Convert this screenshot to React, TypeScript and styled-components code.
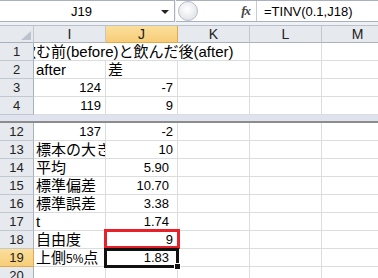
import React from "react";
import styled, { createGlobalStyle, css } from "styled-components";

const GlobalStyle = createGlobalStyle`
  html, body {
    margin: 0;
    padding: 0;
    background: #fff;
    overflow: hidden;
  }
  body {
    font-family: "Liberation Sans", "Noto Sans CJK JP", sans-serif;
  }
`;

const GRID = "#dadcdd";
const HEAD_BG = "#e6e9ee";
const HEAD_LINE = "#c2c8d0";

const Screen = styled.div`
  width: 378px;
  height: 278px;
  overflow: hidden;
  display: flex;
  flex-direction: column;
  background: #fff;
`;

const FormulaBar = styled.div`
  flex: none;
  height: 26px;
  box-sizing: border-box;
  display: flex;
  align-items: flex-start;
  gap: 1px;
  background: #eef1f5;
  border-bottom: 1px solid #b9c0c9;
`;

const NameBox = styled.div`
  width: 175px;
  height: 22px;
  box-sizing: border-box;
  display: flex;
  align-items: center;
  background: #fff;
  border-top: 1px solid #a9b1bc;
  border-bottom: 1px solid #a9b1bc;
  border-right: 1px solid #a9b1bc;
  font-size: 13px;
  color: #000;
`;

const NameText = styled.span`
  flex: 1;
  text-align: center;
  padding-left: 2px;
`;

const DropArrow = styled.span`
  width: 0;
  height: 0;
  margin: 2px 5px 0 0;
  border-left: 4px solid transparent;
  border-right: 4px solid transparent;
  border-top: 4px solid #222;
`;

const FormulaArea = styled.div`
  flex: 1;
  height: 22px;
  box-sizing: border-box;
  display: flex;
  align-items: center;
  background: #fff;
  border-top: 1px solid #a9b1bc;
  border-bottom: 1px solid #a9b1bc;
  overflow: hidden;
`;

const Grip = styled.span`
  flex: none;
  width: 20px;
  height: 20px;
  margin-left: 2px;
  box-sizing: border-box;
  border-radius: 50%;
  border: 1px solid #b8bec7;
  background: radial-gradient(circle at 45% 40%, #ffffff 0%, #eef0f3 45%, #d5d9df 100%);
`;

const FxLabel = styled.span`
  flex: none;
  width: 58px;
  text-align: right;
  padding-right: 6px;
  box-sizing: border-box;
  font-family: "Liberation Serif", serif;
  font-style: italic;
  font-weight: bold;
  font-size: 13px;
  color: #444;
  letter-spacing: -1px;
`;

const FormulaInput = styled.div`
  flex: 1;
  height: 100%;
  display: flex;
  align-items: center;
  padding-left: 7px;
  border-left: 1px solid #c6ccd4;
  font-size: 13px;
  white-space: nowrap;
`;

const Sheet = styled.div`
  display: grid;
  grid-template-columns: 34px repeat(5, 72px);
  width: 394px;
`;

const headActive = css`
  background: linear-gradient(#fbdf9c, #f6cd78);
  border-color: #e2a94c;
`;

const Corner = styled.div`
  position: relative;
  height: 17px;
  box-sizing: border-box;
  background: ${HEAD_BG};
  border-right: 1px solid ${HEAD_LINE};
  border-bottom: 1px solid #a9b1bc;

  &::after {
    content: "";
    position: absolute;
    right: 2px;
    bottom: 2px;
    width: 0;
    height: 0;
    border-left: 10px solid transparent;
    border-bottom: 9px solid #bcc3cc;
  }
`;

const ColHeader = styled.div<{ $active?: boolean }>`
  height: 17px;
  box-sizing: border-box;
  background: ${HEAD_BG};
  border-right: 1px solid ${HEAD_LINE};
  border-bottom: 1px solid #a9b1bc;
  font-size: 14px;
  line-height: 16px;
  text-align: center;
  color: #222;
  ${(p) => p.$active && headActive}
`;

const RowHeader = styled.div<{ $active?: boolean }>`
  height: 18px;
  box-sizing: border-box;
  background: ${HEAD_BG};
  border-right: 1px solid #a9b1bc;
  border-bottom: 1px solid ${HEAD_LINE};
  font-size: 13px;
  line-height: 18px;
  text-align: center;
  color: #222;
  ${(p) => p.$active && headActive}
`;

type Mark = "red" | "select";

const Cell = styled.div<{ $num?: boolean; $dec?: boolean; $span?: number; $mark?: Mark }>`
  height: 18px;
  box-sizing: border-box;
  grid-column: span ${(p) => p.$span ?? 1};
  border-right: 1px solid ${GRID};
  border-bottom: 1px solid ${GRID};
  font-size: ${(p) => (p.$num ? "13px" : "15px")};
  line-height: 18px;
  white-space: nowrap;
  overflow: hidden;
  color: #000;
  text-align: ${(p) => (p.$num ? "right" : "left")};
  padding: ${(p) => (p.$num ? (p.$dec ? "0 8px 0 0" : "0 4px 0 0") : "0 0 0 2px")};

  ${(p) =>
    p.$mark &&
    css`
      position: relative;
      overflow: visible;
      z-index: 2;
    `}

  ${(p) =>
    p.$mark === "red" &&
    css`
      &::after {
        content: "";
        position: absolute;
        left: -2px;
        top: -2px;
        right: -3px;
        bottom: -1px;
        border: 3px solid #e8202a;
      }
    `}

  ${(p) =>
    p.$mark === "select" &&
    css`
      &::after {
        content: "";
        position: absolute;
        left: -2px;
        top: -1px;
        right: -2px;
        bottom: -2px;
        border: 3px solid #111;
      }
      &::before {
        content: "";
        position: absolute;
        right: -4px;
        bottom: -4px;
        width: 5px;
        height: 5px;
        background: #111;
        border: 1px solid #fff;
        z-index: 1;
      }
    `}
`;

const Jp = styled.span`
  font-size: 15px;
`;

const Half = styled.span`
  font-size: 12px;
`;

const Banner = styled.span`
  display: inline-block;
  margin-left: -15px;
  font-size: 15px;
`;

const SplitBar = styled.div`
  grid-column: 1 / -1;
  height: 8px;
  box-sizing: border-box;
  background: #dfe3f0;
  border-bottom: 2px solid #8c8c8c;
`;

type CellData = { v: React.ReactNode; num?: boolean; dec?: boolean; jp?: boolean; mark?: Mark };
type RowData = { n: number; active?: boolean; i?: CellData; j?: CellData };

const topRows: RowData[] = [
  { n: 2, i: { v: "after" }, j: { v: "差", jp: true } },
  { n: 3, i: { v: "124", num: true }, j: { v: "-7", num: true } },
  { n: 4, i: { v: "119", num: true }, j: { v: "9", num: true } },
];

const bottomRows: RowData[] = [
  { n: 12, i: { v: "137", num: true }, j: { v: "-2", num: true } },
  { n: 13, i: { v: "標本の大きさ", jp: true }, j: { v: "10", num: true } },
  { n: 14, i: { v: "平均", jp: true }, j: { v: "5.90", num: true, dec: true } },
  { n: 15, i: { v: "標準偏差", jp: true }, j: { v: "10.70", num: true, dec: true } },
  { n: 16, i: { v: "標準誤差", jp: true }, j: { v: "3.38", num: true, dec: true } },
  { n: 17, i: { v: "t" }, j: { v: "1.74", num: true, dec: true } },
  { n: 18, i: { v: "自由度", jp: true }, j: { v: "9", num: true, mark: "red" } },
  {
    n: 19,
    active: true,
    i: { v: <>上側<Half>5%</Half>点</>, jp: true },
    j: { v: "1.83", num: true, dec: true, mark: "select" },
  },
  { n: 20 },
];

function DataCell({ data }: { data?: CellData }) {
  if (!data) return <Cell />;
  return (
    <Cell $num={data.num} $dec={data.dec} $mark={data.mark}>
      {data.jp ? <Jp>{data.v}</Jp> : data.v}
    </Cell>
  );
}

function SheetRow({ row }: { row: RowData }) {
  return (
    <>
      <RowHeader $active={row.active}>{row.n}</RowHeader>
      <DataCell data={row.i} />
      <DataCell data={row.j} />
      <Cell />
      <Cell />
      <Cell />
    </>
  );
}

export default function App() {
  return (
    <Screen>
      <GlobalStyle />
      <FormulaBar>
        <NameBox>
          <NameText>J19</NameText>
          <DropArrow />
        </NameBox>
        <FormulaArea>
          <Grip />
          <FxLabel>fx</FxLabel>
          <FormulaInput>=TINV(0.1,J18)</FormulaInput>
        </FormulaArea>
      </FormulaBar>
      <Sheet>
        <Corner />
        <ColHeader>I</ColHeader>
        <ColHeader $active>J</ColHeader>
        <ColHeader>K</ColHeader>
        <ColHeader>L</ColHeader>
        <ColHeader>M</ColHeader>

        <RowHeader>1</RowHeader>
        <Cell $span={3}>
          <Banner>飲む前(before)と飲んだ後(after)</Banner>
        </Cell>
        <Cell />
        <Cell />

        {topRows.map((r) => (
          <SheetRow key={r.n} row={r} />
        ))}
        <SplitBar />
        {bottomRows.map((r) => (
          <SheetRow key={r.n} row={r} />
        ))}
      </Sheet>
    </Screen>
  );
}
